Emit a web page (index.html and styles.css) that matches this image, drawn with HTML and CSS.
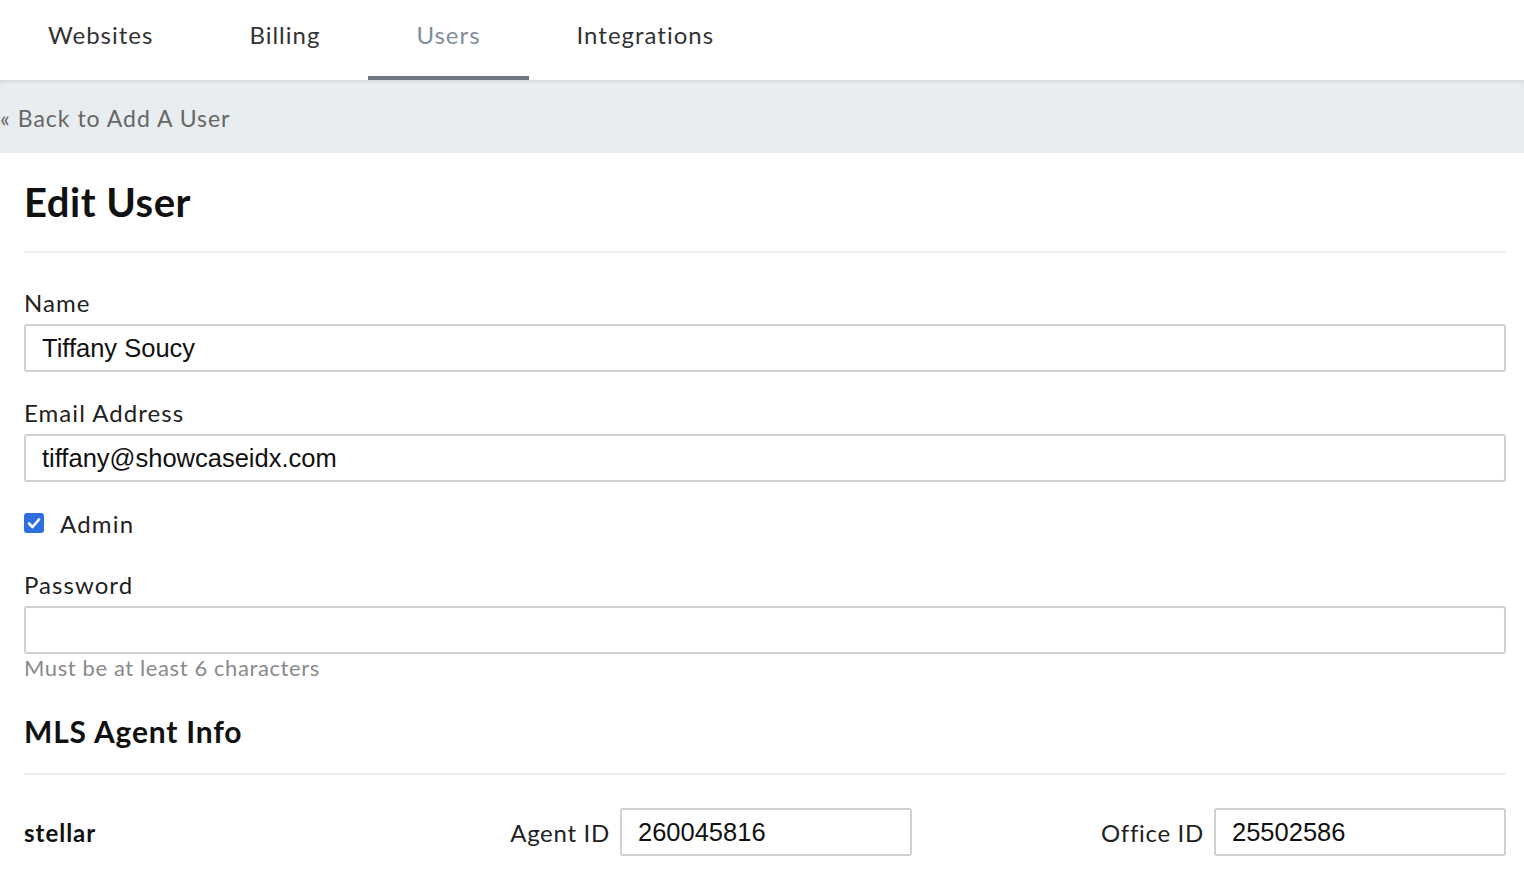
FILE: index.html
```html
<!DOCTYPE html>
<html lang="en">
<head>
<meta charset="utf-8">
<title>Edit User</title>
<link rel="stylesheet" href="styles.css">
</head>
<body>
<nav class="tabs">
  <a class="tab">Websites</a>
  <a class="tab">Billing</a>
  <a class="tab active">Users</a>
  <a class="tab">Integrations</a>
</nav>
<div class="backbar"><a class="back">« Back to Add A User</a></div>
<main class="content">
  <h1 class="title">Edit User</h1>
  <hr class="rule">
  <div class="field">
    <label class="label">Name</label>
    <input class="input" type="text" value="Tiffany Soucy">
  </div>
  <div class="field">
    <label class="label">Email Address</label>
    <input class="input" type="text" value="tiffany@showcaseidx.com">
  </div>
  <div class="check-row">
    <span class="check"><svg width="20" height="20" viewBox="0 0 20 20"><path d="M5 10.5 L8.5 14 L15 6.5" fill="none" stroke="#fff" stroke-width="2.6" stroke-linecap="round" stroke-linejoin="round"/></svg></span>
    <span class="check-label">Admin</span>
  </div>
  <div class="field pw">
    <label class="label">Password</label>
    <input class="input" type="password" value="">
    <div class="help">Must be at least 6 characters</div>
  </div>
  <h2 class="subtitle">MLS Agent Info</h2>
  <hr class="rule rule2">
  <div class="mls-row">
    <div class="mls-name">stellar</div>
    <div class="mls-group">
      <span class="mls-label">Agent ID</span>
      <input class="input small" type="text" value="260045816">
    </div>
    <div class="mls-group office">
      <span class="mls-label">Office ID</span>
      <input class="input small" type="text" value="25502586">
    </div>
  </div>
</main>
</body>
</html>
```
FILE: styles.css
```css
* { box-sizing: border-box; }
body {
  margin: 0;
  font-family: Lato, "Open Sans", sans-serif;
  color: #1a1a1a;
  background: #fff;
}
.tabs {
  display: flex;
  height: 80px;
  background: #fff;
  position: relative;
  z-index: 1;
}
.tab {
  padding: 0 48px 4px;
  line-height: 70px;
  font-size: 24px;
  letter-spacing: 1px;
  color: #333;
  border-bottom: 4px solid transparent;
}
.tab.active {
  color: #7f8e9b;
  border-bottom-color: #6d7883;
}
.backbar {
  height: 73px;
  background: #e8edf0;
  box-shadow: inset 0 3px 4px -2px rgba(0,0,0,0.12);
  display: flex;
  align-items: center;
  padding-top: 2px;
}
.back {
  font-size: 23px;
  letter-spacing: 1px;
  color: #666;
}
.content {
  padding: 0 18px 40px 24px;
}
.title {
  margin: 24px 0 0;
  font-size: 40px;
  letter-spacing: 0.5px;
  line-height: 50px;
  font-weight: 700;
  color: #111;
}
.rule {
  margin: 24px 0 0;
  border: 0;
  height: 2px;
  background: #eeeeee;
}
.field { margin-top: 35px; }
.field + .field { margin-top: 26px; }
.label {
  display: block;
  font-size: 24px;
  letter-spacing: 1.05px;
  line-height: 30px;
  color: #222;
  margin-bottom: 6px;
}
.input {
  display: block;
  width: 100%;
  height: 48px;
  border: 2px solid #d0d0d0;
  border-radius: 3px;
  padding: 0 16px;
  font-family: "Liberation Sans", Arial, sans-serif;
  font-size: 25.5px;
  color: #111;
  background: #fff;
  outline: none;
}
.check-row {
  display: flex;
  align-items: center;
  margin-top: 26px;
  height: 30px;
}
.check {
  width: 20px;
  height: 20px;
  border-radius: 3px;
  background: #2d6fe0;
  display: flex;
  margin-right: 16px;
}
.check-label {
  font-size: 24px;
  letter-spacing: 1.2px;
  color: #222;
}
.field.pw { margin-top: 32px; }
.help {
  font-size: 22px;
  letter-spacing: 0.6px;
  line-height: 28px;
  color: #8a8a8a;
}
.subtitle {
  margin: 29px 0 0;
  font-size: 30px;
  letter-spacing: 0.8px;
  line-height: 40px;
  font-weight: 700;
  color: #111;
}
.rule2 { margin-top: 22px; }
.mls-row {
  display: flex;
  align-items: center;
  margin-top: 33px;
}
.mls-name {
  flex: 1;
  font-size: 24px;
  letter-spacing: 1px;
  font-weight: 700;
  color: #111;
}
.mls-group {
  display: flex;
  align-items: center;
}
.mls-group.office { margin-left: 189px; }
.mls-label {
  font-size: 24px;
  letter-spacing: 0.7px;
  color: #222;
  margin-right: 10px;
}
.input.small { width: 292px; }
```
